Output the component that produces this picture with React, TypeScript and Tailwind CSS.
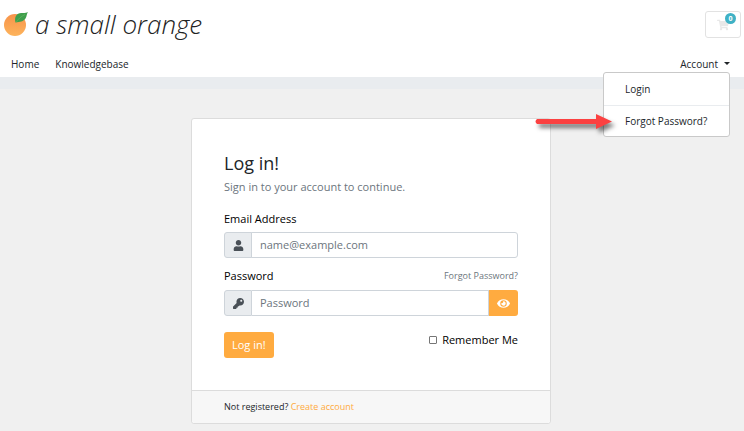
import React, { useState } from 'react';
import { FaEye, FaKey, FaShoppingCart, FaUser } from 'react-icons/fa';

const OrangeLogo: React.FC = () => (
  <svg width="26" height="26" viewBox="0 0 26 26" aria-hidden="true">
    <defs>
      <linearGradient id="peel" x1="0" y1="0" x2="0" y2="1">
        <stop offset="0" stopColor="#f7934a" />
        <stop offset="1" stopColor="#fdb45c" />
      </linearGradient>
    </defs>
    <circle cx="12" cy="14" r="11" fill="url(#peel)" />
    <path d="M12.500 11.500C11 5.500 14 1.500 19 2C21.500 2.200 23.500 1.700 25 1C23.500 3 24 5 22.500 7.500C20.500 10.500 17 11 12.500 11.500Z" fill="#3f9f4c" />
    <path d="M13 11.500C15 8 18 5.500 22 3.500" stroke="#6bbb62" strokeWidth="0.6" fill="none" />
  </svg>
);

const CalloutArrow: React.FC = () => (
  <svg className="absolute right-[117px] top-[40px] drop-shadow-[3px_4px_2px_rgba(0,0,0,0.5)]" width="77" height="18" viewBox="0 0 77 18" aria-hidden="true">
    <path d="M2 6H61V1L77 8.500L61 16V11H2Q-1 8.500 2 6Z" fill="#fb4141" />
  </svg>
);

const App: React.FC = () => {
  const [menuOpen, setMenuOpen] = useState(true);
  const [showPassword, setShowPassword] = useState(false);

  return (
    <div className="min-h-screen bg-[#f0f0f0] font-['Open_Sans',sans-serif] text-[#212529]">
      <header className="bg-white">
        <div className="flex items-start justify-between px-[3px] pt-[11px]">
          <a href="#" className="flex items-start gap-[6px]">
            <OrangeLogo />
            <span className="text-[26px] font-light italic leading-[26px] text-[#222]">a small orange</span>
          </a>
          <a href="#cart" aria-label="Shopping cart" className="relative flex h-[27px] w-9 items-center justify-center rounded-[3px] border border-[#e2e2e2]">
            <FaShoppingCart className="h-3 w-3 text-[#e8e8e8]" />
            <span className="absolute right-1 top-px flex h-[11px] w-[11px] items-center justify-center rounded-full bg-[#3fb1c5] text-[7px] font-bold leading-none text-white">0</span>
          </a>
        </div>

        <nav className="flex h-[39px] items-center justify-between pl-[11px] pr-[14px] pt-3 text-[10px] leading-4">
          <div className="flex gap-4">
            <a href="#">Home</a>
            <a href="#knowledgebase">Knowledgebase</a>
          </div>
          <div className="relative">
            <button type="button" onClick={() => setMenuOpen(!menuOpen)} className="flex items-center gap-[6px]">
              Account
              <span className="h-0 w-0 border-x-[3px] border-t-[3px] border-x-transparent border-t-[#212529]" />
            </button>
            {menuOpen && (
              <div className="absolute right-0 top-4 w-[127px] whitespace-nowrap rounded-[3px] border border-[#c9c9c9] bg-white">
                <a href="#login" className="block px-[21px] py-2 leading-4">Login</a>
                <a href="#forgot" className="block border-t border-[#e9ecef] px-[21px] py-[7px] leading-4">Forgot Password?</a>
                <CalloutArrow />
              </div>
            )}
          </div>
        </nav>
      </header>
      <div className="h-3 bg-[#e9ecef]" />

      <main className="flex justify-center pb-2 pr-0.5 pt-[29px]">
        <form className="w-full max-w-[360px] rounded-[3px] border border-[#dcdcdc] bg-white text-[11px] leading-4" onSubmit={e => e.preventDefault()}>
          <div className="px-8 pb-8 pt-8">
            <h1 className="text-[18px] leading-6">Log in!</h1>
            <p className="mt-1 text-[#6c757d]">Sign in to your account to continue.</p>

            <label htmlFor="email" className="mt-4 block text-black">Email Address</label>
            <div className="mt-[5px] flex h-[26px]">
              <span className="flex w-7 items-center justify-center rounded-l-[3px] border border-[#ced4da] bg-[#e9ecef]">
                <FaUser className="h-[11px] w-[11px] text-[#495057]" />
              </span>
              <input id="email" type="email" placeholder="name@example.com" className="-ml-px min-w-0 flex-1 rounded-r-[3px] border border-[#ced4da] px-2 placeholder:text-[#6c757d]" />
            </div>

            <div className="mt-[10px] flex items-center justify-between">
              <label htmlFor="password" className="text-black">Password</label>
              <a href="#forgot" className="text-[9px] text-[#6c757d]">Forgot Password?</a>
            </div>
            <div className="mt-[6px] flex h-[26px]">
              <span className="flex w-7 items-center justify-center rounded-l-[3px] border border-[#ced4da] bg-[#e9ecef]">
                <FaKey className="h-[11px] w-[11px] text-[#495057]" />
              </span>
              <input id="password" type={showPassword ? 'text' : 'password'} placeholder="Password" className="min-w-0 flex-1 border-y border-r border-[#ced4da] px-2 placeholder:text-[#6c757d]" />
              <button type="button" aria-label="Show password" onClick={() => setShowPassword(!showPassword)} className="flex w-[29px] items-center justify-center rounded-r-[3px] bg-[#ffab40] text-white">
                <FaEye className="h-[13px] w-[13px]" />
              </button>
            </div>

            <div className="mt-4 flex items-start justify-between">
              <button type="submit" className="h-[26px] rounded-[3px] bg-[#ffab40] px-2 text-white">Log in!</button>
              <label className="flex items-center gap-[5px] text-black">
                <input type="checkbox" className="h-2 w-2 appearance-none rounded-[1px] border border-[#767676] bg-white checked:bg-[#ffab40]" />
                Remember Me
              </label>
            </div>
          </div>
          <footer className="rounded-b-[3px] border-t border-[#dcdcdc] bg-[#f7f7f7] px-8 py-2 text-[9px]">
            Not registered? <a href="#register" className="text-[#ffab40]">Create account</a>
          </footer>
        </form>
      </main>
    </div>
  );
};

export default App;
